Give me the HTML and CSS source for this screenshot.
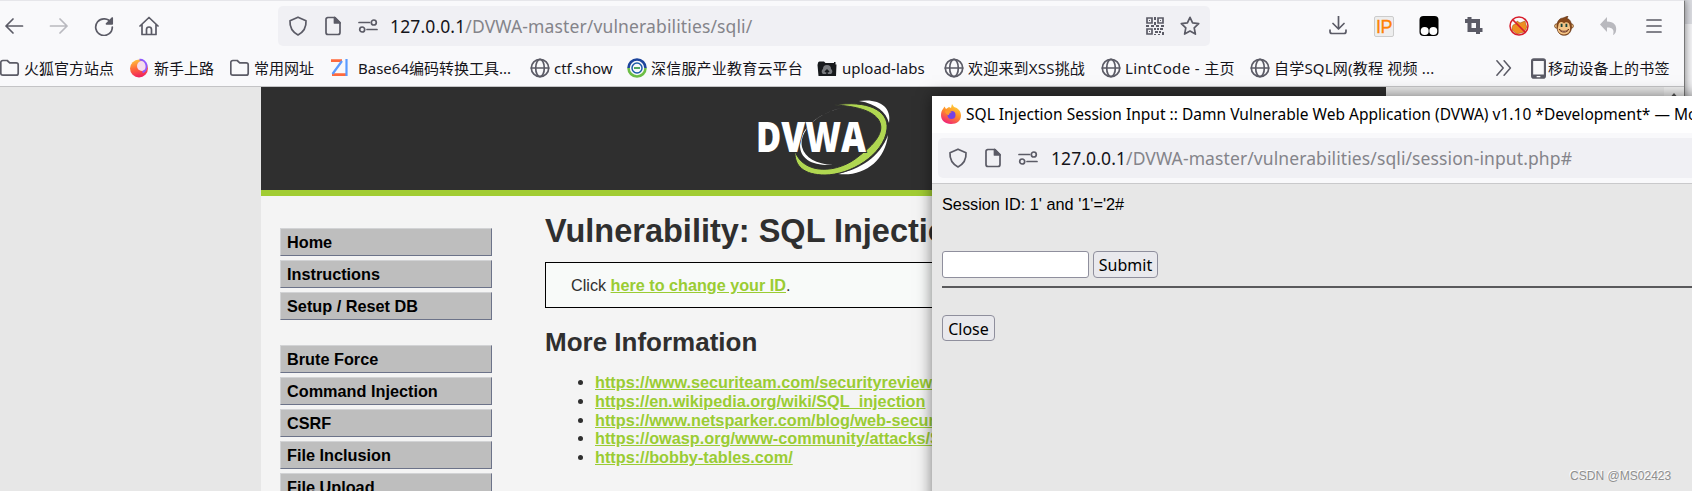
FILE: index.html
```html
<!DOCTYPE html>
<html lang="zh-CN">
<head>
<meta charset="utf-8">
<title>Vulnerability: SQL Injection :: DVWA</title>
<link rel="stylesheet" href="styles.css">
</head>
<body>
<svg class="defs" width="0" height="0">
  <defs>
    <linearGradient id="fox" x1="0.8" y1="0" x2="0.3" y2="1"><stop offset="0" stop-color="#ffe03a"/><stop offset=".5" stop-color="#ff8a2a"/><stop offset="1" stop-color="#f0207a"/></linearGradient>
    <linearGradient id="orb" x1="0.2" y1="0" x2="0.4" y2="1"><stop offset="0" stop-color="#ffc83c"/><stop offset=".5" stop-color="#ff6a3a"/><stop offset="1" stop-color="#f0205e"/></linearGradient>
    <symbol id="shield" viewBox="0 0 20 20"><path d="M10 1.200 18 4.800c.4 6-2 11-8 14.200C4 15.800 1.600 10.800 2 4.800z"/></symbol>
    <symbol id="page" viewBox="0 0 20 20"><path d="M4.500 1.500h7.500l5 5v10a2 2 0 0 1-2 2h-10a2 2 0 0 1-2-2v-13a2 2 0 0 1 2-2z"/><path class="solid" d="M11.500 1.500v5.500h5.500z"/></symbol>
    <symbol id="perm" viewBox="0 0 20 20"><path d="M1 6.500h10.500M9 13.500h10"/><circle cx="15.800" cy="6.500" r="2.500"/><circle cx="4.200" cy="13.500" r="2.500"/></symbol>
    <symbol id="globe" viewBox="0 0 20 20"><circle cx="10" cy="10" r="8.700"/><ellipse cx="10" cy="10" rx="4.300" ry="8.700"/><path d="M1.300 10h17.400"/></symbol>
    <symbol id="folder" viewBox="0 0 20 20"><path d="M.8 4.500a2 2 0 0 1 2-2h4.400l2.500 2.300h6.500a2 2 0 0 1 2 2v8.400a2 2 0 0 1-2 2H2.800a2 2 0 0 1-2-2z"/></symbol>
  </defs>
</svg>

<div class="desktop">
  <div class="browser">
    <div class="toolbar">
      <div class="nav">
        <svg class="ic" viewBox="0 0 20 20"><path d="M18.500 10H2M9 3 2 10l7 7"/></svg>
        <svg class="ic dim" viewBox="0 0 20 20"><path d="M1.500 10H18M11 3l7 7-7 7"/></svg>
        <svg class="ic" viewBox="0 0 20 20"><path d="M17.200 7A8.300 8.300 0 1 0 18.300 11"/><path class="solid" d="M18.200 2v5.800H12.500z"/></svg>
        <svg class="ic" viewBox="0 0 20 20"><path d="M1 10 10 1.500 19 10M3 8.500V18.500h14V8.500M7.500 18.500v-5a2.500 2.500 0 0 1 5 0v5"/></svg>
      </div>
      <div class="urlbar">
        <svg class="ic"><use href="#shield"/></svg>
        <svg class="ic"><use href="#page"/></svg>
        <svg class="ic"><use href="#perm"/></svg>
        <span class="url"><b>127.0.0.1</b>/DVWA-master/vulnerabilities/sqli/</span>
        <svg class="ic qr" viewBox="0 0 20 20"><path d="M2 2h5v5H2zM13 2h5v5h-5zM2 13h5v5H2z"/><path class="solid" d="M4 4h1v1H4zM15 4h1v1h-1zM4 15h1v1H4zM9 1h2v3H9zM9 6h2v3H9zM1 9h3v2H1zM6 9h3v2H6zM11 9h3v2h-3zM16 9h3v2h-3zM9 12h2v2H9zM12 12h2v2h-2zM15 12h3v2h-3zM10 15h3v2h-3zM14 15h2v2h-2zM17 16h2v3h-2zM9 18h2v1H9zM13 18h2v1h-2z"/></svg>
        <svg class="ic" viewBox="0 0 20 20"><path d="m10 1.300 2.600 5.600 6.100.8-4.500 4.200 1.200 6.200L10 15.100l-5.400 3 1.200-6.200L1.300 7.700l6.100-.8z"/></svg>
      </div>
      <div class="tools">
        <svg class="ic" viewBox="0 0 20 20"><path d="M9.500 0v12.500M4 7.500l5.500 5.500L15 7.500M1 14v1.500a2 2 0 0 0 2 2h12a2 2 0 0 0 2-2V14"/></svg>
        <span class="ip">IP</span>
        <svg class="art" viewBox="0 0 20 20"><rect width="19" height="20" x=".5" rx="4" fill="#000"/><circle cx="5.700" cy="15" r="4" fill="#fff"/><circle cx="14.300" cy="15" r="4" fill="#fff"/></svg>
        <svg class="art" viewBox="0 0 20 20"><path d="M5.500 1v13h13M1 5h13v13" fill="none" stroke="#5b5b66" stroke-width="4"/></svg>
        <svg class="art" viewBox="0 0 20 20"><path d="M3 14c0-4 1-6 4-6l1-3 3 2 5-2 1 4 1 2-3 5-7 2z" fill="#ef8e22" stroke="#a4601c" stroke-width=".6"/><circle cx="10" cy="10" r="9" fill="none" stroke="#d81e2c" stroke-width="1.500"/><path d="m4 4 12 12" stroke="#d81e2c" stroke-width="1.700"/></svg>
        <svg class="art" viewBox="0 0 20 20"><circle cx="2.800" cy="10" r="2.200" fill="#f4c587" stroke="#6d3a12" stroke-width=".8"/><circle cx="17.200" cy="10" r="2.200" fill="#f4c587" stroke="#6d3a12" stroke-width=".8"/><path d="M3 11C2.500 5 6 2 9 2l5-2-1 2.500c3.500 1 4.500 4 4.500 8.500 0 5-3 8.300-7.300 8.300S3 16 3 11z" fill="#87481a" stroke="#5d2f10" stroke-width=".6"/><path d="M4.300 10c0-4.500 4-5 5.700-2.500C11.700 5 15.700 6 15.700 10c1.500 4.500-1 8.500-5.700 8.500S2.500 14.500 4.300 10z" fill="#f4c587"/><path d="M7.600 7.800v3.200M12.400 7.800v3.200" stroke="#17433b" stroke-width="1.800"/><path d="M5.200 13c2 3 7.600 3 9.600 0-1 4.200-8.600 4.200-9.600 0z" fill="#fff" stroke="#6d2d12" stroke-width=".9"/></svg>
        <svg class="art" viewBox="0 0 20 20"><path d="M8 1v4.500c7 0 10 4 9 9.500-.4 2-1.500 3.500-3 4 1.500-5 0-7.500-6-7.500V16L1 8.500z" fill="#b9b9be"/></svg>
        <svg class="ic" viewBox="0 0 20 20"><path d="M3 4h14M3 10h14M3 16h14"/></svg>
      </div>
    </div>
    <div class="bookmarks">
      <span class="bm"><svg class="ic"><use href="#folder"/></svg>火狐官方站点</span>
      <span class="bm"><svg class="art" viewBox="0 0 20 20"><circle cx="9" cy="10.500" r="9" fill="url(#orb)"/><circle cx="12" cy="8" r="5" fill="#f6dcec"/><path d="M9.500 1.800a6.500 6.500 0 0 1 3 12.500" fill="none" stroke="#9059ff" stroke-width="2"/></svg>新手上路</span>
      <span class="bm"><svg class="ic"><use href="#folder"/></svg>常用网址</span>
      <span class="bm zi"><svg class="art" viewBox="0 0 20 20"><path d="M1 2.700h11M2 16.700h14" stroke="#ff6a3d" stroke-width="2.800"/><path d="M12 3 2.500 16M16.500 1v17" stroke="#5b9bff" stroke-width="2.200"/></svg><span class="b64">Base64编码转换工具...</span></span>
      <span class="bm"><svg class="ic"><use href="#globe"/></svg><span class="ctf">ctf.show</span></span>
      <span class="bm"><svg class="art" viewBox="0 0 20 20"><path d="M1.500 10a8.500 8.500 0 0 1 17 0" fill="none" stroke="#1c449c" stroke-width="2.600"/><path d="M1.500 10a8.500 8.500 0 0 0 17 0" fill="none" stroke="#6cbd45" stroke-width="2.600"/><circle cx="10" cy="10" r="5" fill="none" stroke="#1c5ba8" stroke-width="1.500"/><path d="M7 10h6" stroke="#3b9b52" stroke-width="1.800"/></svg><span class="sang">深信服产业教育云平台</span></span>
      <span class="bm"><svg class="art" viewBox="0 0 20 20"><path d="M1 5q0-1.500 1.500-1.500H7L8.500 5H17V4h1.500v2.500h1L19 18H1.500L.5 7z" fill="#17191c"/><path d="M6 16a3 3 0 0 1 0-5 4 4 0 0 1 8 0 3 3 0 0 1 0 5z" fill="#77797d"/><path d="M10 17v-5M8 14l2-2 2 2" stroke="#17191c" stroke-width="1.500" fill="none"/></svg><span class="up">upload-labs</span></span>
      <span class="bm"><svg class="ic"><use href="#globe"/></svg><span class="xss">欢迎来到XSS挑战</span></span>
      <span class="bm"><svg class="ic"><use href="#globe"/></svg><span class="lint">LintCode - 主页</span></span>
      <span class="bm"><svg class="ic"><use href="#globe"/></svg><span class="sql">自学SQL网(教程 视频 ...</span></span>
      <span class="bm"><svg class="ic more" viewBox="0 0 20 20"><path d="m1 2 7 8-7 8M9 2l7 8-7 8"/></svg></span>
      <span class="bm mobile"><svg class="phone" viewBox="0 0 16 22"><path fill-rule="evenodd" d="M3 0h10a3 3 0 0 1 3 3v16a3 3 0 0 1-3 3H3a3 3 0 0 1-3-3V3a3 3 0 0 1 3-3zM2.300 3v14.500h11.400V3zM6 19v1.300h4V19z"/></svg><span class="mob">移动设备上的书签</span></span>
    </div>
    <div class="viewport">
      <div class="container">
        <div class="header">
          <svg class="logo" viewBox="0 0 134 78">
            <path d="M84 8C58 13 41 32 44 47c3 11 14 17 31 18-21 1-33-6-33-20 0-15 17-32 42-37z" fill="#fff"/>
            <path d="M101 1c20-3 33 6 30 22-3-11-12-19-30-22z" fill="#fff"/>
            <path d="M130 35c-3 26-24 42-50 39 22-5 42-17 50-39z" fill="#fff"/>
            <path class="ring" d="M76 5c33-5 55 5 53 24-3 26-37 46-62 46-21 0-31-9-30-24 8 24 43 23 64 5 20-15 26-27 19-37-6-8-21-13-44-14z" fill="#b0d751"/>
            <text x="-2" y="52" textLength="110" lengthAdjust="spacingAndGlyphs">DVWA</text>
          </svg>
        </div>
        <div class="main">
          <div class="menu">
            <ul><li>Home</li><li>Instructions</li><li>Setup / Reset DB</li></ul>
            <ul><li>Brute Force</li><li>Command Injection</li><li>CSRF</li><li>File Inclusion</li><li>File Upload</li></ul>
          </div>
          <div class="body">
            <h1>Vulnerability: SQL Injection</h1>
            <div class="box">Click <a>here to change your ID</a>.</div>
            <h2>More Information</h2>
            <ul class="links">
              <li><a>https://www.securiteam.com/securityreviews/5DP0N1P76E.html</a></li>
              <li><a>https://en.wikipedia.org/wiki/SQL_injection</a></li>
              <li><a>https://www.netsparker.com/blog/web-security/sql-injection-cheat-sheet/</a></li>
              <li><a>https://owasp.org/www-community/attacks/SQL_Injection</a></li>
              <li><a>https://bobby-tables.com/</a></li>
            </ul>
          </div>
        </div>
      </div>
      <div class="scroll"><svg viewBox="0 0 10 6"><path d="M0 6 5 0l5 6z"/></svg></div>
    </div>
  </div>

  <div class="popup">
    <div class="title">
      <svg class="fox" viewBox="0 0 20 20"><path d="M2 5 3.500 2.500 5 5l3-2 2 1 1-4 2 3c4 1 7 4 7 8.500C20 16.500 16 20 10 20S0 16.500 0 11c0-3 1-5 2-6z" fill="url(#fox)"/><circle cx="10.500" cy="11" r="4" fill="#7542e5"/><path d="M4 7c3-2 5 0 7 1-2 1-3 1-3 3-2 0-4-2-4-4z" fill="#ff9a2e"/></svg>
      <span>SQL Injection Session Input :: Damn Vulnerable Web Application (DVWA) v1.10 *Development* — Mozilla Firefox</span>
    </div>
    <div class="popbar">
      <div class="urlbar">
        <svg class="ic"><use href="#shield"/></svg>
        <svg class="ic"><use href="#page"/></svg>
        <svg class="ic"><use href="#perm"/></svg>
        <span class="url"><b>127.0.0.1</b>/DVWA-master/vulnerabilities/sqli/session-input.php#</span>
      </div>
    </div>
    <div class="popbody">
      <p>Session ID: 1' and '1'='2#</p>
      <div class="form"><input type="text"><button class="submit">Submit</button></div>
      <div class="rule"></div>
      <button class="close">Close</button>
    </div>
    <div class="watermark">CSDN @MS02423</div>
  </div>
</div>
</body>
</html>
```
FILE: styles.css
```css
* { box-sizing: border-box; }
body { margin: 0; overflow: hidden; background: #e7e7e7; font-family: "Liberation Sans", Arial, sans-serif; }
.defs { position: absolute; }
.desktop { position: relative; width: 1692px; height: 491px; overflow: hidden; background: linear-gradient(#dcdde2 0 24px, #f4f4f6 24px); }
.browser { width: 1685px; height: 491px; display: flex; flex-direction: column; background: #f9f9fb; border-top: 1px solid #e6e6ea; border-right: 1px solid #777; box-shadow: 0 0 8px rgba(0,0,0,.5); }

.ic { width: 20px; height: 20px; flex: none; fill: none; stroke: #5b5b66; stroke-width: 1.7; stroke-linejoin: round; stroke-linecap: round; }
.ic .solid, .solid { fill: #5b5b66; }
.dim { opacity: .4; }
.art { width: 20px; height: 20px; flex: none; }

.toolbar { height: 50px; flex: none; display: flex; align-items: center; }
.nav { display: flex; gap: 25px; width: 278px; padding-left: 4px; }
.urlbar { display: flex; align-items: center; width: 932px; height: 40px; padding: 0 10px; border-radius: 5px; background: #f0f0f4; font-family: "Noto Sans", sans-serif; }
.urlbar .ic { margin-right: 15px; }
.url { flex: 1; margin-left: -3px; color: #84848a; font-size: 17.5px; letter-spacing: .13px; white-space: nowrap; }
.url b { font-weight: 400; color: #15141a; }
.urlbar .qr { margin-right: 15px; stroke-linejoin: miter; }
.qr .solid { stroke: none; }
.urlbar .ic:last-child { margin-right: 0; }
.tools { display: flex; gap: 25px; margin-left: 119px; align-items: center; }
.ip { width: 20px; height: 21px; border: 1px solid #ccc; border-radius: 2px; background: #eee; color: #ff8207; font-size: 18px; line-height: 20px; text-align: center; letter-spacing: -.5px; -webkit-text-stroke: .3px #ff8207; }

.bookmarks { height: 36px; flex: none; padding-bottom: 1px; display: grid; grid-template-columns: 130px 100px 100px 200px 97px 190px 127px 157px 149px 246px 35px auto; justify-content: start; border-bottom: 1px solid #c4c4c6; font: 15px "Noto Sans", "Noto Sans CJK SC", sans-serif; color: #15141a; }
.bm { display: flex; align-items: center; gap: 4px; white-space: nowrap; min-width: 0; line-height: 20px; }
.zi { gap: 8px; }
.mobile { gap: 2px; }
.mob { letter-spacing: .2px; }
.up { margin-left: 1px; }
.sang, .sql, .xss { letter-spacing: .2px; }
.lint { letter-spacing: .35px; }
.more { width: 18px; }
.phone { width: 15px; height: 21px; flex: none; fill: #5b5b66; }

.viewport { flex: 1; display: flex; background: #e7e7e7; overflow: hidden; }
.container { width: 1125px; margin-left: 261px; background: #f4f4f4; flex: none; }
.header { height: 109px; background: #2f2f2f; border-bottom: 6px solid #a1cc33; padding: 13px 0 0 497px; }
.logo { display: block; width: 134px; height: 78px; overflow: visible; }
.logo .ring { stroke: #2f2f2f; stroke-width: 1; }
.logo text { font: 800 42px "Open Sans", sans-serif; fill: #fff; stroke: #2f2f2f; stroke-width: 2; paint-order: stroke; }
.scroll { width: 20px; margin-left: auto; background: #f0f0f0; padding: 6px 5px; }
.scroll svg { display: block; width: 10px; height: 6px; fill: #555; }
.main { display: flex; }
.menu { width: 284px; padding: 32px 0 0 19px; }
.menu ul { list-style: none; margin: 0 0 25px; padding: 0; width: 212px; display: flex; flex-direction: column; gap: 4px; }
.menu li { height: 28px; padding-left: 6px; font: bold 16.25px/27px "Liberation Sans", sans-serif; color: #000; background: #bebebe; border: 1px solid; border-color: #d2d3d5 #6c7389 #6c7389 #d2d3d5; }
.body { flex: 1; color: #2f2f2f; font-size: 16.2px; }
h1 { margin: 16px 0 0; font-size: 32.5px; line-height: 38px; height: 50px; white-space: nowrap; }
.box { height: 46px; border: 1px solid #000; background: #f8faf9; padding-left: 25px; line-height: 45px; }
a { color: #9acc33; font-weight: bold; text-decoration: underline; }
h2 { margin: 19px 0 0; font-size: 26px; line-height: 30px; }
.links { margin: 16px 0 0; padding-left: 50px; font-size: 16.25px; line-height: 18.8px; white-space: nowrap; }

.popup { position: absolute; left: 932px; top: 96px; width: 780px; height: 420px; background: #e7e7e7; box-shadow: 0 0 14px rgba(0,0,0,.5); }
.title { height: 37px; padding: 0 0 1px 9px; display: flex; align-items: center; gap: 5px; background: #fff; font: 15.5px "Noto Sans", sans-serif; letter-spacing: .02px; color: #000; white-space: nowrap; }
.fox { width: 20px; height: 20px; flex: none; }
.popbar { height: 51px; background: #f9f9fb; padding: 5px 0 0 6px; border-bottom: 1px solid #c9c9cb; }
.popbar .urlbar { width: 800px; }
.popbar .url { margin-left: -2px; letter-spacing: .1px; }
.popbody { padding: 11px 10px; font-size: 16.3px; color: #000; }
.popbody p { margin: 0; line-height: 18px; }
.form { display: flex; gap: 4px; margin-top: 38px; height: 27px; }
input { width: 147px; height: 27px; border: 1px solid #8f8f9d; border-radius: 3px; background: #fff; }
button { border: 1px solid #8f8f9d; border-radius: 4px; background: #e9e9ed; color: #000; padding: 0; font: 16px "Noto Sans", sans-serif; }
.submit { width: 65px; height: 27px; }
.rule { height: 2px; margin-top: 8px; background: #5a5a5c; width: 780px; }
.close { display: block; width: 53px; height: 26px; margin-top: 27px; padding-top: 1px; }
.watermark { position: absolute; left: 638px; top: 373px; font-size: 12px; letter-spacing: .03px; line-height: 14px; color: #8f8f8f; text-shadow: -1px -1px 0 #fff; white-space: nowrap; }
```
